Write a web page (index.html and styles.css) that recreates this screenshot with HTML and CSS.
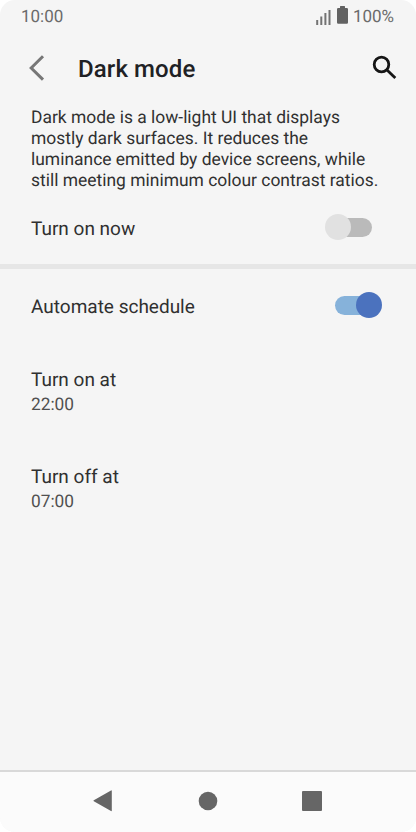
FILE: index.html
```html
<!DOCTYPE html>
<html lang="en">
<head>
<meta charset="utf-8">
<title>Dark mode</title>
<link rel="stylesheet" href="styles.css">
</head>
<body>
<div class="screen">
  <div class="status">
    <span class="clock">10:00</span>
    <svg class="signal" width="15" height="15" viewBox="0 0 15 15"><path d="M1.2 10v5M5.3 6.5V15M9.4 3v12M13.5 0v15"/></svg>
    <svg class="battery" width="11" height="18" viewBox="0 0 11 18"><path d="M3 2V.6Q3 0 3.600 0H7.400Q8 0 8 .6V2H9.800Q11 2 11 3.200V16.500Q11 17.700 9.800 17.700H1.200Q0 17.700 0 16.500V3.200Q0 2 1.200 2z"/></svg>
    <span class="percent">100%</span>
  </div>
  <header class="header">
    <svg class="back" width="18" height="28" viewBox="0 0 18 28"><path d="M15 2.300 3.200 14 15 25.600"/></svg>
    <h1 class="title">Dark mode</h1>
    <svg class="search" width="26" height="26" viewBox="0 0 26 26"><circle cx="9.500" cy="9.500" r="7.300"/><path d="m15 15 8.300 8"/></svg>
  </header>
  <main class="content">
    <p class="description">Dark mode is a low-light UI that displays<br>mostly dark surfaces. It reduces the<br>luminance emitted by device screens, while<br>still meeting minimum colour contrast ratios.</p>
    <div class="row row-now"><span class="label now">Turn on now</span><span class="switch"></span></div>
    <div class="row row-schedule"><span class="label schedule">Automate schedule</span><span class="switch switch-on"></span></div>
    <div class="setting"><div class="label">Turn on at</div><div class="value">22:00</div></div>
    <div class="setting"><div class="label">Turn off at</div><div class="value">07:00</div></div>
  </main>
  <nav class="nav">
    <svg width="20" height="22" viewBox="0 0 20 22"><path d="M.8 10.200 18 .4q.8-.4.800.6v19.500q0 1-.8.500L.8 11.300q-.8-.6 0-1.100z"/></svg>
    <svg width="20" height="20" viewBox="0 0 20 20"><circle cx="10" cy="10" r="9.300"/></svg>
    <svg width="20" height="20" viewBox="0 0 20 20"><rect width="20" height="20" rx="1"/></svg>
  </nav>
</div>
</body>
</html>
```
FILE: styles.css
```css
* { box-sizing: border-box; }
body { margin: 0; background: #fff; font-family: Roboto, sans-serif; text-rendering: geometricPrecision; }
.screen { width: 416px; height: 832px; display: flex; flex-direction: column; overflow: hidden; border-radius: 15px; background: #f5f5f5; color: #303030; }
svg { display: block; flex: none; }
.status { height: 33px; padding: 0 22px 0 21px; display: flex; align-items: center; color: #6b6b6b; font-size: 17px; line-height: 31px; }
.clock, .percent { padding-top: 2px; }
.signal { margin: 1px 0 0 auto; fill: none; stroke: #737373; stroke-width: 2; }
.battery { margin: -3px 0 0 6px; fill: #626262; }
.percent { margin-left: 5px; }
.header { height: 73px; padding: 0 18px 3px 28px; display: flex; align-items: center; }
.back { margin-bottom: 1px; fill: none; stroke: #777; stroke-width: 3; }
.title { margin: 2px 0 0 32px; color: #202124; font-size: 24px; font-weight: 500; line-height: 30px; letter-spacing: .1px; }
.search { margin-left: auto; fill: none; stroke: #161616; stroke-width: 2.8; }
.content { flex: 1; }
.description { margin: 0; padding: 2px 0 0 31px; height: 84px; font-size: 17.45px; line-height: 20.9px; white-space: nowrap; }
.row { display: flex; align-items: center; justify-content: space-between; padding-left: 31px; }
.row-now { height: 79px; border-bottom: 5px solid #e6e6e6; padding-right: 44px; }
.row-schedule { height: 72px; padding-right: 34px; }
.label { font-size: 19px; line-height: 24px; white-space: nowrap; }
.now { padding-top: 3px; }
.schedule { padding-top: 3px; }
.switch { width: 47px; height: 26px; display: grid; }
.switch::before, .switch::after { content: ""; grid-area: 1 / 1; align-self: center; }
.switch::before { width: 37px; height: 19px; border-radius: 10px; background: #bababa; justify-self: end; }
.switch::after { width: 26px; height: 26px; border-radius: 50%; background: #e1e1e1; justify-self: start; }
.switch-on::before { background: #86b2da; justify-self: start; }
.switch-on::after { background: #4b72be; justify-self: end; }
.setting { height: 97px; padding: 27px 31px 0; }
.value { color: #505050; font-size: 17.3px; line-height: 26px; }
.nav { height: 62px; border-top: 2px solid #d9d9d9; background: #fbfbfb; display: flex; align-items: center; justify-content: space-between; padding: 0 94px 2px 93px; fill: #666; }
```
